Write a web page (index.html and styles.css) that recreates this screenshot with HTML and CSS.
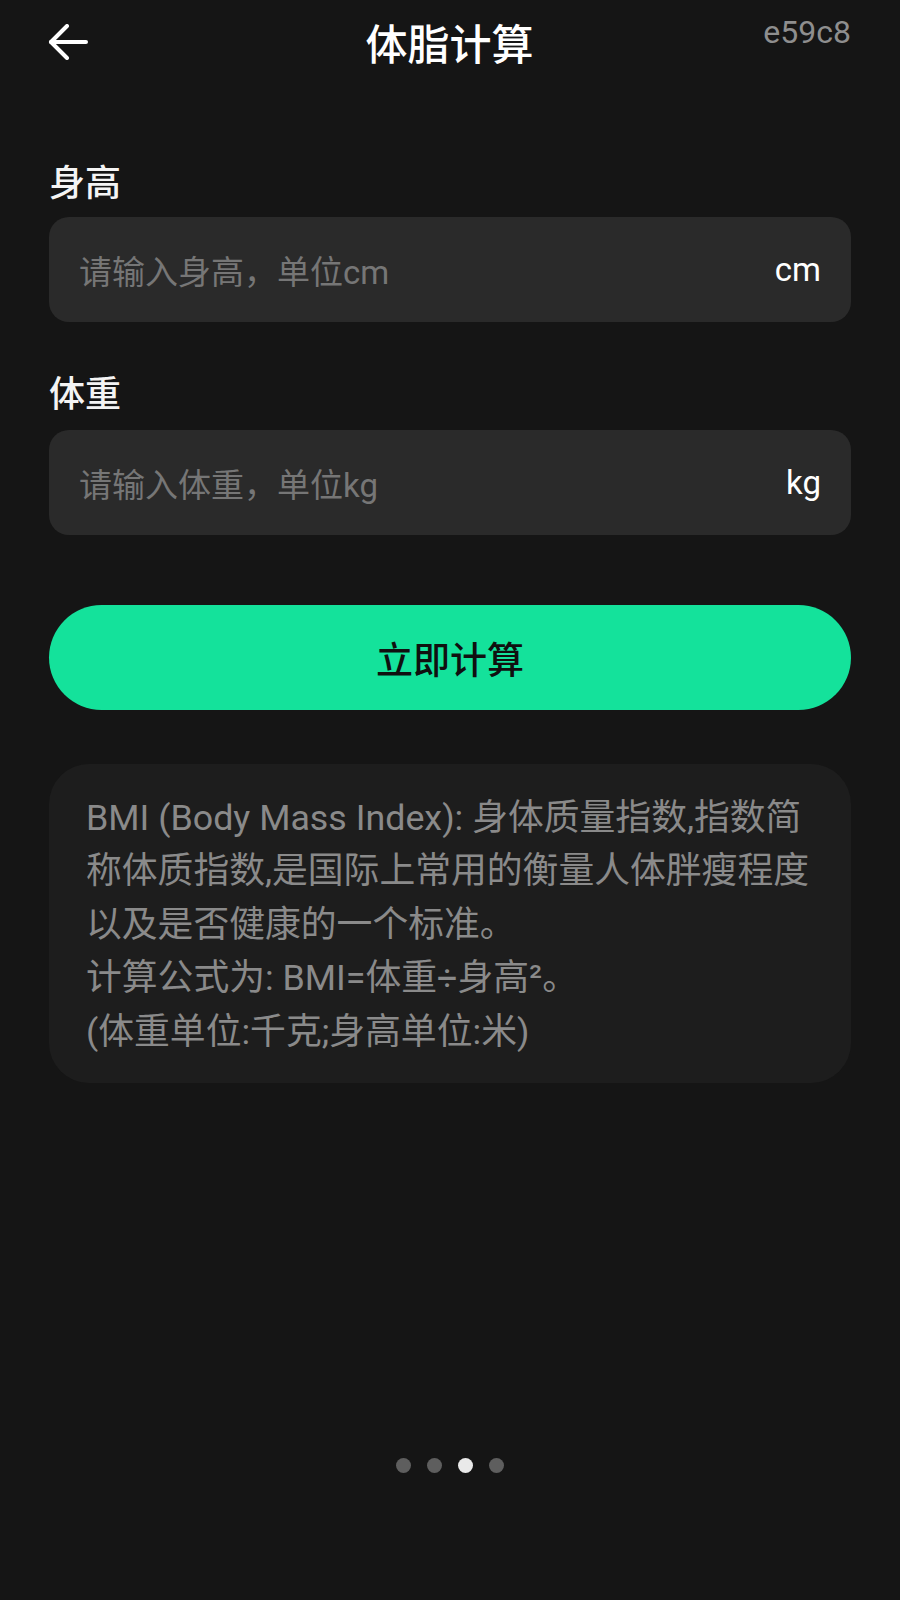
FILE: index.html
```html
<!DOCTYPE html>
<html lang="zh-CN">
<head>
<meta charset="utf-8">
<title>体脂计算</title>
<link rel="stylesheet" href="styles.css">
</head>
<body>
<div class="page">
  <header class="topbar">
    <div class="back">
      <svg width="40" height="36" viewBox="0 0 40 36" fill="none" stroke="#ffffff" stroke-width="4" stroke-linecap="round" stroke-linejoin="round">
        <path d="M38 18H3"/>
        <path d="M19 2L3 18L19 34"/>
      </svg>
    </div>
    <h1 class="title">体脂计算</h1>
    <div class="spacer"></div>
    <span class="tag">e59c8</span>
  </header>

  <main class="content">
    <div class="label label-first">身高</div>
    <div class="field">
      <span class="placeholder">请输入身高，单位cm</span>
      <span class="unit">cm</span>
    </div>

    <div class="label label-second">体重</div>
    <div class="field">
      <span class="placeholder">请输入体重，单位kg</span>
      <span class="unit">kg</span>
    </div>

    <button class="calc">立即计算</button>

    <section class="info">
      <p>BMI (Body Mass Index): 身体质量指数,指数简<br>称体质指数,是国际上常用的衡量人体胖瘦程度<br>以及是否健康的一个标准。<br>计算公式为: BMI=体重÷身高²。<br>(体重单位:千克;身高单位:米)</p>
    </section>

    <div class="dots">
      <span class="dot"></span>
      <span class="dot"></span>
      <span class="dot active"></span>
      <span class="dot"></span>
    </div>
  </main>
</div>
</body>
</html>
```

FILE: styles.css
```css
* {
  box-sizing: border-box;
}

html, body {
  margin: 0;
  padding: 0;
  background: #151515;
}

body {
  font-family: Roboto, "Noto Sans CJK SC", "Noto Sans", sans-serif;
  color: #f2f2f2;
  width: 900px;
  min-height: 1600px;
}

.page {
  position: relative;
}

.topbar {
  position: relative;
  height: 82px;
  display: grid;
  grid-template-columns: 1fr auto 1fr;
  align-items: center;
  padding: 0 49px 0 48px;
}

.back {
  display: flex;
  align-items: center;
  padding-top: 2px;
}

.title {
  margin: 0;
  font-family: "Noto Sans CJK SC", sans-serif;
  font-size: 42px;
  font-weight: 500;
  line-height: 50px;
  color: #ffffff;
  padding-top: 2px;
}

.tag {
  position: absolute;
  right: 49px;
  top: 13px;
  font-family: Roboto, sans-serif;
  font-size: 32px;
  line-height: 38px;
  color: #8e8e8e;
}

.content {
  display: flex;
  flex-direction: column;
  padding: 0 49px;
}

.label {
  font-family: "Noto Sans CJK SC", sans-serif;
  font-size: 36px;
  font-weight: 500;
  line-height: 50px;
  color: #f4f4f4;
  margin-bottom: 12px;
}

.label-first {
  margin-top: 73px;
}

.label-second {
  margin-top: 44px;
  margin-bottom: 14px;
}

.field {
  height: 105px;
  border-radius: 20px;
  background: #2a2a2a;
  display: flex;
  align-items: center;
  justify-content: space-between;
  padding: 0 30px;
}

.placeholder {
  font-family: Roboto, "Noto Sans CJK SC", sans-serif;
  font-size: 33px;
  color: #767676;
}

.unit {
  font-family: Roboto, sans-serif;
  font-size: 33px;
  color: #ffffff;
}

.calc {
  margin-top: 70px;
  height: 105px;
  border: none;
  border-radius: 53px;
  background: #14e29b;
  color: #101010;
  font-family: "Noto Sans CJK SC", sans-serif;
  font-size: 37px;
  font-weight: 500;
  padding: 0;
  width: 100%;
}

.info {
  margin-top: 54px;
  background: #1d1d1d;
  border-radius: 40px;
  padding: 28px 20px 24px 37px;
}

.info p {
  margin: 0;
  font-family: Roboto, "Noto Sans CJK SC", sans-serif;
  font-size: 35.8px;
  line-height: 53.4px;
  color: #8a8a8a;
  white-space: nowrap;
}

.dots {
  margin-top: 375px;
  display: flex;
  justify-content: center;
  gap: 16px;
}

.dot {
  width: 15px;
  height: 15px;
  border-radius: 50%;
  background: #5e5e5e;
}

.dot.active {
  background: #e9e9e9;
}
```
